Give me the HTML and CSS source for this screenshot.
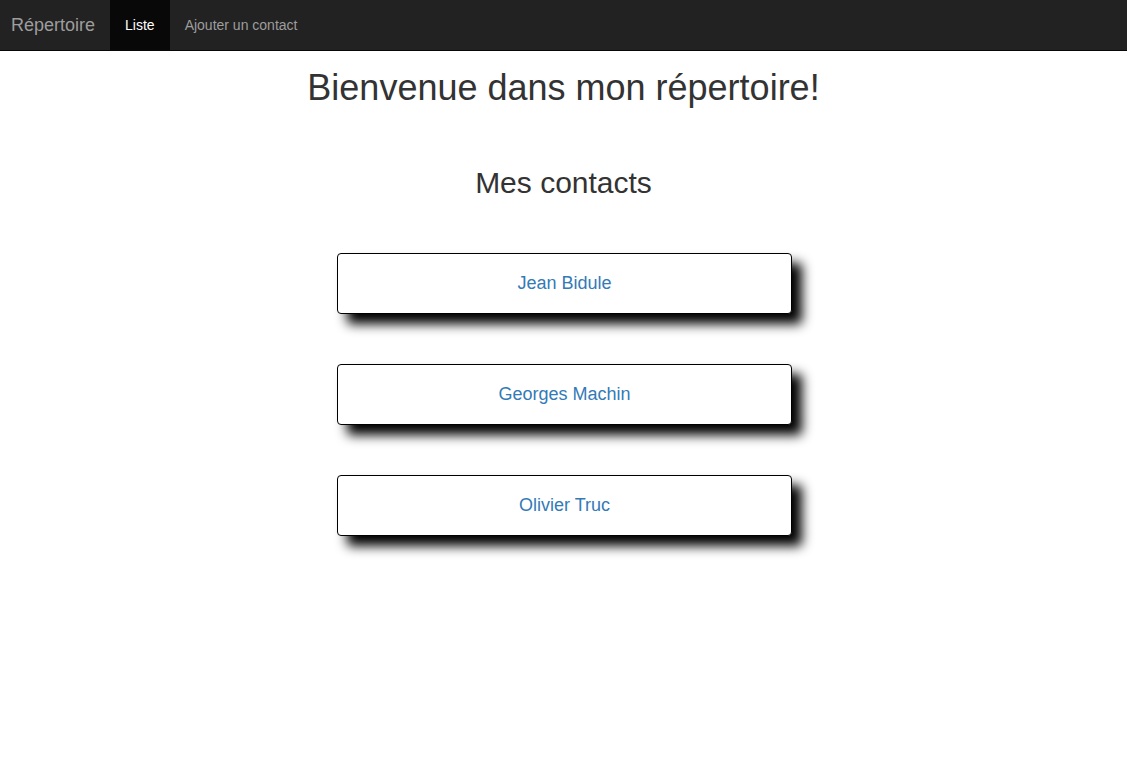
FILE: index.html
```html
<!DOCTYPE html>
<html lang="fr">
<head>
<meta charset="utf-8">
<title>Répertoire</title>
<link rel="stylesheet" href="styles.css">
</head>
<body>
<nav class="navbar">
  <a class="brand" href="#">Répertoire</a>
  <ul class="nav">
    <li class="active"><a href="#">Liste</a></li>
    <li><a href="#">Ajouter un contact</a></li>
  </ul>
</nav>
<main class="container">
  <h1 class="title">Bienvenue dans mon répertoire!</h1>
  <h2 class="subtitle">Mes contacts</h2>
  <div class="list">
    <div class="card"><a href="#">Jean Bidule</a></div>
    <div class="card"><a href="#">Georges Machin</a></div>
    <div class="card"><a href="#">Olivier Truc</a></div>
  </div>
</main>
</body>
</html>
```
FILE: styles.css
```css
* { box-sizing: border-box; }
html, body { margin: 0; padding: 0; }
body {
  font-family: "Liberation Sans", Arial, Helvetica, sans-serif;
  font-size: 14px;
  line-height: 1.42857;
  color: #333;
  background: #fff;
  min-height: 100vh;
}
a { text-decoration: none; }
.navbar {
  display: flex;
  align-items: stretch;
  height: 51px;
  background: #222;
  border-bottom: 1px solid #080808;
}
.brand {
  display: flex;
  align-items: center;
  padding: 2px 15px 0 11px;
  font-size: 18px;
  color: #9d9d9d;
}
.nav { display: flex; list-style: none; margin: 0; padding: 0; }
.nav li a {
  display: flex;
  align-items: center;
  height: 50px;
  padding: 2px 15px 0;
  color: #9d9d9d;
}
.nav li.active a { background: #080808; color: #fff; }
.container {
  display: flex;
  flex-direction: column;
  align-items: center;
  padding-bottom: 60px;
}
.title {
  margin: 17px 0 0;
  font-size: 36px;
  font-weight: 500;
  line-height: 40px;
}
.subtitle {
  margin: 58px 0 0;
  font-size: 30px;
  font-weight: 500;
  line-height: 33px;
}
.list {
  display: flex;
  flex-direction: column;
  gap: 50px;
  margin-top: 54px;
  width: 455px;
  margin-left: 2px;
}
.card {
  height: 61px;
  display: flex;
  align-items: center;
  justify-content: center;
  border: 1px solid #000;
  border-radius: 4px;
  background: #fff;
  box-shadow: 10px 10px 12px #000;
}
.card a {
  font-size: 18px;
  color: #337ab7;
}
```
